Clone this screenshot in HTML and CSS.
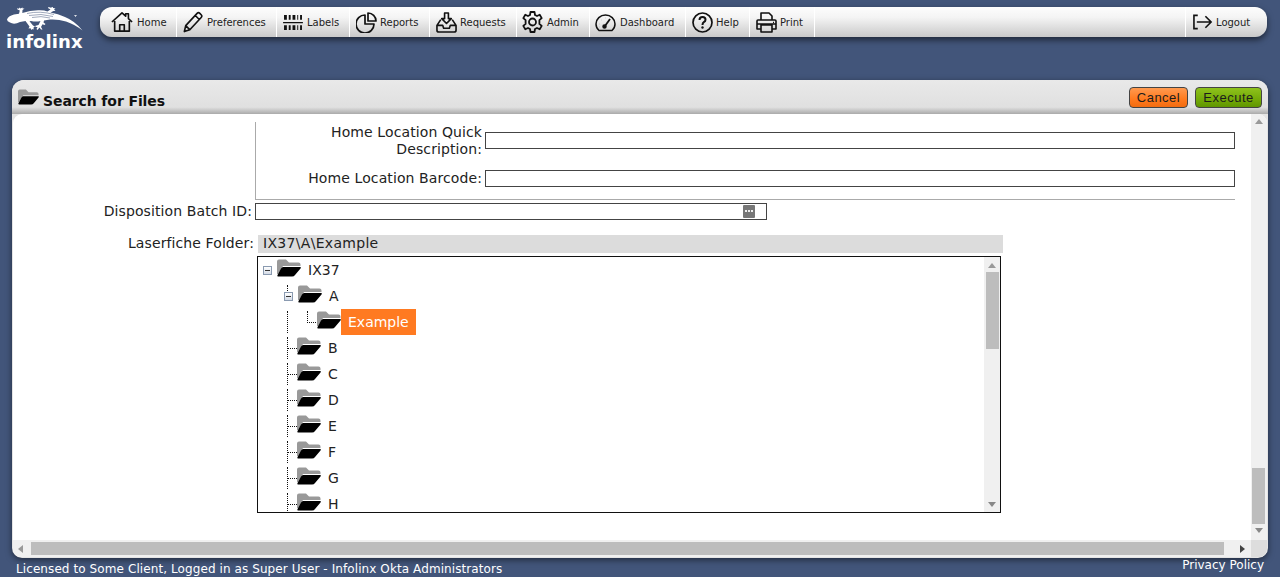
FILE: index.html
```html
<!DOCTYPE html>
<html lang="en">
<head>
<meta charset="utf-8">
<title>Search for Files</title>
<link rel="stylesheet" href="styles.css">
</head>
<body>
<svg class="defs" width="0" height="0" aria-hidden="true">
  <symbol id="folder" viewBox="0 0 24 18">
    <path fill="#999" d="M0 15V2.500Q0 .5 2 .5h7l3 3h9.500q2 0 2 2V7H6L1 15z"/>
    <path fill="#000" d="M6 8h17q1.500 0 .5 1.500L18 16q-1 1.500-3 1.500H1.500q-1.500 0-1-1.500L4 9.500Q5 8 6 8z"/>
  </symbol>
</svg>
<header class="top">
  <div class="logo">
    <svg class="gecko" width="78" height="26" viewBox="6 7 78 26">
      <path fill="#fff" d="M7 19.500Q8 16 14 14.500L19 13.700 19.800 10.500 17.500 9.500 17 8.200 19 8.800 19.300 7.500 20.500 8.500 22.500 7.500 22.700 8.500 24.500 8.500 22.500 10 22.300 13Q30 10.500 38 10.300 44 10 47.500 11.500L50.500 9.500 48 8 48.500 7 51 7.800 52.500 6.800 53.200 8 55.500 8.500 54 9.500 55.500 11 53.500 11 50.500 12.600Q58 14 65 17 75 21 82.500 30.500 75 24.500 66 21.500 58 19 50 19.500L44 20.500 43.500 22.500 45.500 24 44.500 25 42.500 24.200 41 27 42.500 29.500 41 29.500 39.500 27.500 37.500 30 36.500 29 37.500 27 35.500 27 35.500 25.800 38.500 25 40.500 21Q36 22 31 21L29.500 21.200 33 25.500 35 26.500 33.500 27.500 33.700 29.500 32.500 29 31.500 30 30.500 28.300 28.500 28.500 29.500 26.500 25.500 21 20 22Q14 25 10 22.500 7 21.500 7 19.500z"/>
      <path fill="none" stroke="#42557a" stroke-width=".5" d="M27 13.500Q40 10.500 54 14.500M29 15.500Q41 13 53 16.500M32 17.500Q41 15.500 50 18"/>
      <path fill="#fff" d="M74 15h3v.6h-3zM75.200 15h.6v2h-.6z"/>
    </svg>
    <span class="logo-text">infolinx</span>
  </div>
  <nav class="nav">
    <a class="nav-item home">
      <svg class="ico" width="22" height="22" viewBox="0 0 24 24" fill="none" stroke="#111" stroke-width="1.800" stroke-linejoin="round"><path d="M1 12 12 2l4 3.600V3h3v5.300L23 12M4 11v11h16V11M9.500 22v-7h5v7"/></svg>
      <span>Home</span>
    </a>
    <a class="nav-item prefs">
      <svg class="ico" width="20" height="22" viewBox="0 0 22 24" fill="none" stroke="#111" stroke-width="1.800" stroke-linejoin="round"><path d="M1.500 22.500 3 16 15.500 2.500q1.500-1.500 3 0l1.500 1.500q1.500 1.500 0 3L7.500 20.500zM3 16l4.500 4.500M13.500 4.800l5 5"/></svg>
      <span>Preferences</span>
    </a>
    <a class="nav-item labels">
      <svg class="ico" width="20" height="17" viewBox="0 0 21 18" fill="#111"><path d="M1 1h3v5H1zM6 1h2v5H6zM10 1h3v5h-3zM15 1h1v5h-1zM18 1h2v5h-2zM0 8.500h21v1.200H0zM1 12h3v5H1zM6 12h2v5H6zM10 12h3v5h-3zM15 12h1v5h-1zM18 12h2v5h-2z"/></svg>
      <span>Labels</span>
    </a>
    <a class="nav-item reports">
      <svg class="ico" width="21" height="21" viewBox="0 0 21 21" fill="none" stroke="#111" stroke-width="1.700" stroke-linejoin="round"><path d="M9 3a9 9 0 1 0 9 9H9zM12 1a8 8 0 0 1 8 8h-8z"/></svg>
      <span>Reports</span>
    </a>
    <a class="nav-item requests">
      <svg class="ico" width="21" height="21" viewBox="0 0 22 22" fill="none" stroke="#111" stroke-width="1.700" stroke-linejoin="round"><path d="M9 1h4v6h3l-5 5-5-5h3zM5 8 1 14v5q0 2 2 2h16q2 0 2-2v-5l-4-6M1 14h6l1 3h6l1-3h6"/></svg>
      <span>Requests</span>
    </a>
    <a class="nav-item admin">
      <svg class="ico" width="21" height="22" viewBox="0 0 21 22" fill="none" stroke="#111" stroke-width="1.800" stroke-linejoin="round"><circle cx="10.500" cy="11" r="3.500"/><path d="M8.500 1h4l.5 3 2 1 2.700-1.300 2 3.400-2.300 2v3.800l2.300 2-2 3.400L15 17l-2 1-.5 3h-4L8 18l-2-1-2.700 1.300-2-3.400 2.300-2V9.100l-2.300-2 2-3.400L6 5l2-1z"/></svg>
      <span>Admin</span>
    </a>
    <a class="nav-item dash">
      <svg class="ico" width="21" height="19" viewBox="0 0 21 19" fill="none" stroke="#111" stroke-width="1.500" stroke-linejoin="round"><path d="M4 17.500Q1 15 1 11a9.500 9 0 0 1 19 0q0 4-3 6.500z"/><path d="M10 13 15 6" stroke-width="1.800"/><circle cx="9.500" cy="13.500" r="1.500" fill="#111"/><path d="M4 11h.1M6 7h.1M10 5h.1M4 14h.1" stroke-width="1.500"/></svg>
      <span>Dashboard</span>
    </a>
    <a class="nav-item help">
      <svg class="ico" width="21" height="21" viewBox="0 0 21 21" fill="none" stroke="#111" stroke-width="1.700"><circle cx="10.500" cy="10.500" r="9.500"/><path d="M7.500 8q0-3 3-3t3 2.700q0 1.500-1.700 2.500-1.300.8-1.300 2.800" stroke-width="2"/><circle cx="10.500" cy="15.500" r="1.200" fill="#111" stroke="none"/></svg>
      <span>Help</span>
    </a>
    <a class="nav-item print">
      <svg class="ico" width="21" height="21" viewBox="0 0 21 21" fill="none" stroke="#111" stroke-width="1.600" stroke-linejoin="round"><path d="M5 8V1h8l3 3v4M5 17H1V9q0-1 1-1h17q1 0 1 1v8h-4M5 13h11v7H5zM1 12h19"/><path d="M17 10.500h1" stroke-width="1.500"/></svg>
      <span>Print</span>
    </a>
    <a class="nav-item logout">
      <svg class="ico" width="20" height="16" viewBox="0 0 21 16" fill="none" stroke="#111" stroke-width="1.700"><path d="M5 1H1v14h4M4 8h15M13 2l6 6-6 6"/></svg>
      <span>Logout</span>
    </a>
  </nav>
</header>

<main class="panel">
  <div class="title-bar">
    <svg class="title-ico" width="21" height="16"><use href="#folder"/></svg>
    <h1 class="title">Search for Files</h1>
    <div class="actions">
      <button class="btn cancel">Cancel</button>
      <button class="btn execute">Execute</button>
    </div>
  </div>
  <div class="body">
    <div class="viewport">
      <div class="content">
        <div class="form">
          <div class="nested">
            <div class="field tall">
              <label class="lbl">Home Location Quick Description:</label>
              <div class="input"></div>
            </div>
            <div class="field">
              <label class="lbl">Home Location Barcode:</label>
              <div class="input"></div>
            </div>
          </div>
          <div class="batch">
            <label class="lbl-out">Disposition Batch ID:</label>
            <div class="input batch-input"><span class="dots"></span></div>
          </div>
          <div class="folder-row">
            <label class="lbl-out">Laserfiche Folder:</label>
            <div class="folder-col">
              <div class="path">IX37\A\Example</div>
              <div class="tree">
                <div class="tree-rows">
                  <div class="row"><span class="exp"></span><svg class="fld" width="24" height="18"><use href="#folder"/></svg><span class="node">IX37</span></div>
                  <div class="row lvl1"><i class="vline top-stub"></i><span class="exp"></span><svg class="fld" width="24" height="18"><use href="#folder"/></svg><span class="node">A</span></div>
                  <div class="row lvl2"><i class="vline"></i><i class="elbow"></i><svg class="fld" width="24" height="18"><use href="#folder"/></svg><span class="node sel">Example</span></div>
                  <div class="row lvl1b"><i class="vline"></i><i class="tick"></i><svg class="fld" width="24" height="18"><use href="#folder"/></svg><span class="node">B</span></div>
                  <div class="row lvl1b"><i class="vline"></i><i class="tick"></i><svg class="fld" width="24" height="18"><use href="#folder"/></svg><span class="node">C</span></div>
                  <div class="row lvl1b"><i class="vline"></i><i class="tick"></i><svg class="fld" width="24" height="18"><use href="#folder"/></svg><span class="node">D</span></div>
                  <div class="row lvl1b"><i class="vline"></i><i class="tick"></i><svg class="fld" width="24" height="18"><use href="#folder"/></svg><span class="node">E</span></div>
                  <div class="row lvl1b"><i class="vline"></i><i class="tick"></i><svg class="fld" width="24" height="18"><use href="#folder"/></svg><span class="node">F</span></div>
                  <div class="row lvl1b"><i class="vline"></i><i class="tick"></i><svg class="fld" width="24" height="18"><use href="#folder"/></svg><span class="node">G</span></div>
                  <div class="row lvl1b"><i class="vline"></i><i class="tick"></i><svg class="fld" width="24" height="18"><use href="#folder"/></svg><span class="node">H</span></div>
                </div>
                <div class="sb-v tree-sb">
                  <span class="arr up"></span>
                  <span class="tree-thumb"></span>
                  <span class="arr down push"></span>
                </div>
              </div>
            </div>
          </div>
        </div>
      </div>
      <div class="sb-v main-sb">
        <span class="arr up"></span>
        <span class="main-thumb"></span>
        <span class="arr down"></span>
      </div>
    </div>
    <div class="sb-h">
      <span class="arr left"></span>
      <span class="h-thumb"></span>
      <span class="arr right"></span>
      <span class="corner"></span>
    </div>
  </div>
</main>

<footer class="foot">
  <span class="lic">Licensed to Some Client, Logged in as Super User - Infolinx Okta Administrators</span>
  <a class="privacy">Privacy Policy</a>
</footer>
</body>
</html>
```

FILE: styles.css
```css
* { box-sizing: border-box; }
html, body { margin: 0; height: 577px; overflow: hidden; }
body {
  background: #42557a;
  font-family: "DejaVu Sans", Verdana, sans-serif;
  color: #111;
  display: flex;
  flex-direction: column;
}
.defs { position: absolute; }

/* header */
.top { display: flex; flex: none; height: 80px; padding: 7px 13px 0 6px; }
.logo { width: 94px; height: 46px; flex: none; position: relative; color: #fff; }
.gecko { display: block; }
.logo-text { position: absolute; left: 0; top: 25px; font-size: 18px; font-weight: bold; letter-spacing: .1px; line-height: 20px; }
.nav {
  flex: 1; height: 30px; display: flex; border-radius: 12px;
  background: linear-gradient(#fdfdfd, #f4f4f4 35%, #c9c9c9);
  box-shadow: 0 3px 6px rgba(0,0,0,.55);
}
.nav-item {
  display: flex; align-items: center; gap: 4px; height: 30px; flex: none;
  font-size: 10px; color: #222; border-right: 1px solid #fff;
  padding-left: 11px;
}
.home { width: 77px; }
.prefs { width: 100px; padding-left: 6px; }
.labels { width: 73px; padding-left: 6px; }
.reports { width: 80px; padding-left: 6px; gap: 3px; }
.requests { width: 87px; padding-left: 6px; gap: 3px; }
.admin { width: 73px; padding-left: 5px; gap: 4px; }
.dash { width: 96px; padding-left: 5px; gap: 4px; }
.help { width: 64px; padding-left: 6px; gap: 3px; }
.print { width: 65px; padding-left: 6px; gap: 3px; }
.logout { margin-left: auto; width: 82px; padding-left: 7px; gap: 3px; border-right: 0; border-left: 1px solid #fff; }

/* panel */
.panel {
  height: 478px; flex: none; margin: 0 12px; border-radius: 12px 12px 10px 10px;
  background: #e4e4e4; box-shadow: 0 2px 6px rgba(0,0,0,.5);
  display: flex; flex-direction: column; overflow: hidden;
}
.title-bar {
  height: 34px; flex: none; position: relative; display: flex; align-items: flex-end; padding: 0 6px 4px 6px;
  background: linear-gradient(#e9e9e9, #e0e0e0 80%, #aaa);
}
.title-ico { position: absolute; left: 6px; top: 9px; }
.title { margin: 0 0 0 25px; font-size: 14px; line-height: 17px; font-weight: bold; color: #111; letter-spacing: -.1px; }
.actions { margin-left: auto; align-self: flex-start; margin-top: 7px; display: flex; gap: 7px; }
.btn {
  height: 21px; border: 1px solid #444; border-radius: 4px; padding: 0;
  font: 13px/17px "Liberation Sans", Arial, sans-serif; letter-spacing: .5px; color: #1c1c1c;
}
.cancel { width: 59px; background: linear-gradient(#ff9a50, #ff7a1e 60%, #f26c10); }
.execute { width: 67px; background: linear-gradient(#8ec21c, #74aa08 60%, #609600); }
.body {
  flex: 1; min-height: 0; margin: 0 1px 1px 1px; background: #fff; border-radius: 9px 9px 8px 8px;
  display: flex; flex-direction: column; overflow: hidden;
}
.viewport { flex: 1; min-height: 0; display: flex; }
.content { flex: 1; min-width: 0; overflow: hidden; }
.form { padding-top: 8px; font-size: 14px; letter-spacing: .1px; }
.nested {
  margin: 0 16px 0 242px; height: 78px; border-left: 1px solid #aaa; border-bottom: 1px solid #aaa;
  padding-top: 2px; display: flex; flex-direction: column; gap: 12px;
}
.field { display: flex; align-items: flex-start; }
.tall { height: 34px; }
.lbl { width: 227px; flex: none; text-align: right; line-height: 17px; padding-right: 1px; color: #222; }
.input { height: 17px; border: 1px solid #444; background: #fff; flex: 1; margin-left: 2px; }
.tall .input { margin-top: 8px; }
.batch { display: flex; margin-top: 3px; height: 32px; }
.lbl-out { width: 242px; flex: none; text-align: right; line-height: 17px; padding-right: 3px; color: #222; }
.batch-input { flex: none; width: 512px; margin-left: 0; position: relative; }
.dots {
  position: absolute; right: 11px; top: 1px; width: 12px; height: 13px; border-radius: 1px;
  background: #777;
}
.dots::after {
  content: ""; position: absolute; left: 2px; top: 5px; width: 8px; height: 2px;
  background: repeating-linear-gradient(90deg, #eee 0 2px, transparent 2px 3px);
}
.folder-row { display: flex; }
.folder-row .lbl-out { padding-right: 1px; }
.folder-col { margin-left: 3px; display: flex; flex-direction: column; }
.path { width: 745px; height: 18px; background: #dcdcdc; padding-left: 5px; line-height: 17px; margin-bottom: 3px; color: #222; letter-spacing: .3px; }
.tree {
  width: 744px; height: 257px; border: 1px solid #111; margin-left: -1px; display: flex; overflow: hidden;
}
.tree-rows { flex: 1; min-width: 0; overflow: hidden; }
.row { height: 26px; display: flex; align-items: center; padding-left: 5px; position: relative; font-size: 14px; letter-spacing: 0; color: #222; }
.exp {
  width: 9px; height: 9px; flex: none; border: 1px solid #8a9ab0; margin-right: 5px; position: relative;
  background: linear-gradient(#fff, #d4dbe6);
}
.exp::after { content: ""; position: absolute; left: 1px; top: 3px; width: 5px; height: 1px; background: #333; }
.fld { flex: none; margin-top: -4px; }
.node { margin-left: 7px; }
.lvl1 { padding-left: 26px; }
.lvl2 { padding-left: 59px; }
.lvl1b { padding-left: 39px; }
.vline { position: absolute; left: 29px; top: 2px; bottom: 2px; border-left: 1px dotted #111; }
.top-stub { bottom: 18px; }
.elbow { position: absolute; left: 49px; top: 2px; height: 12px; width: 9px; border-left: 1px dotted #111; border-bottom: 1px dotted #111; }
.tick { position: absolute; left: 30px; top: 13px; width: 9px; border-top: 1px dotted #111; }
.sel { background: #ff7a21; color: #fff; margin-left: 0; height: 26px; line-height: 26px; padding: 0 7px 0 7px; }
.sb-v { width: 16px; flex: none; background: #f0f0f0; display: flex; flex-direction: column; align-items: center; }
.tree-thumb { width: 13px; height: 77px; background: #bdbdbd; margin-top: 4px; flex: none; }
.tree-sb .up { margin-top: 6px; margin-bottom: 0; }
.main-thumb { width: 13px; height: 56px; background: #bdbdbd; margin: 342px 1px 0 0; flex: none; }
.arr { width: 0; height: 0; flex: none; display: block; border: 4px solid transparent; }
.up { border-top: 0; border-bottom: 5px solid #999; margin-top: 5px; margin-bottom: 2px; }
.down { border-bottom: 0; border-top: 5px solid #888; margin-top: 4px; }
.push { margin-top: auto; margin-bottom: 5px; }
.sb-h { height: 17px; flex: none; background: #f0f0f0; display: flex; align-items: center; }
.h-thumb { width: 1193px; height: 13px; background: #bdbdbd; flex: none; }
.left { border-left: 0; border-right: 5px solid #999; margin: 0 8px 0 5px; }
.right { border-right: 0; border-left: 5px solid #444; margin-left: 16px; }
.corner { flex: 1; align-self: stretch; background: #ddd; margin-left: 6px; }

/* footer */
.foot { flex: 1; min-height: 0; display: flex; padding: 0 16px; color: #fff; font-size: 12px; justify-content: space-between; }
.lic { padding-top: 5px; line-height: 12px; letter-spacing: .09px; }
.privacy { padding-top: 1px; line-height: 12px; }
```
